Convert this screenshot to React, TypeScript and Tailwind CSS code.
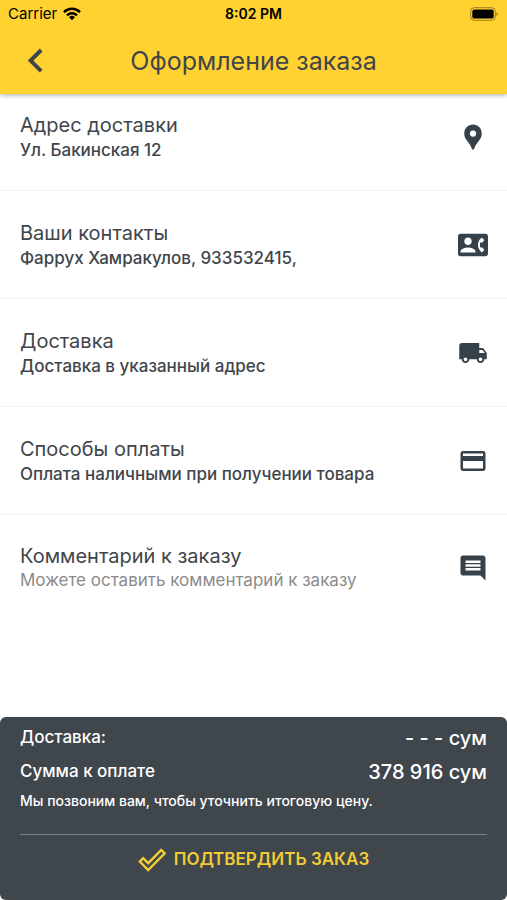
import React from 'react';
import { IconType } from 'react-icons';
import { MdComment, MdContactPhone, MdCreditCard, MdLocalShipping, MdLocationPin } from 'react-icons/md';

interface OrderRow {
  title: string;
  value: string;
  icon: IconType;
}

const rows: OrderRow[] = [
  { title: 'Адрес доставки', value: 'Ул. Бакинская 12', icon: MdLocationPin },
  { title: 'Ваши контакты', value: 'Фаррух Хамракулов, 933532415,', icon: MdContactPhone },
  { title: 'Доставка', value: 'Доставка в указанный адрес', icon: MdLocalShipping },
  { title: 'Способы оплаты', value: 'Оплата наличными при получении товара', icon: MdCreditCard },
];

const StatusBar = () => (
  <div className="grid grid-cols-3 items-center h-7 px-2 text-black">
    <div className="flex items-center gap-1.5 text-[15px]">
      <span>Carrier</span>
      <svg width="18" height="14" viewBox="0 0 18 14" fill="none" stroke="currentColor" strokeWidth="2.5" aria-hidden="true">
        <path d="M1 5.1a11.4 11.4 0 0 1 16 0" />
        <path d="M4 8.3a7.2 7.2 0 0 1 10 0" />
        <path d="M9 13.2 6.1 10.2a4.1 4.1 0 0 1 5.8 0Z" fill="currentColor" stroke="none" />
      </svg>
    </div>
    <span className="text-center text-sm font-semibold">8:02 PM</span>
    <svg className="justify-self-end" width="31" height="14" viewBox="0 0 31 14" aria-hidden="true">
      <rect x="2.7" y="0.7" width="24.6" height="12.6" rx="3.8" fill="none" stroke="#000" strokeOpacity="0.4" />
      <rect x="4.3" y="2.4" width="21.4" height="9.2" rx="2.2" fill="#000" />
      <path d="M28.6 4.8a2.5 2.5 0 0 1 0 4.4Z" fill="#000" fillOpacity="0.45" />
    </svg>
  </div>
);

const Header = () => (
  <header className="relative bg-[#ffd232] shadow-[0_1px_5px_rgba(0,0,0,0.35)]">
    <StatusBar />
    <div className="grid grid-cols-[48px_1fr_48px] items-center h-[66px] px-3">
      <button type="button" aria-label="Назад" className="flex items-center justify-center h-12">
        <svg width="16" height="26" viewBox="0 0 16 26" fill="none" stroke="#3f464b" strokeWidth="4" aria-hidden="true">
          <path d="M13.2 2 2.6 12.6 13.2 23.2" />
        </svg>
      </button>
      <h1 className="text-center text-[25px] leading-8 text-[#3f464b] whitespace-nowrap">Оформление заказа</h1>
    </div>
  </header>
);

const App: React.FC = () => {
  return (
    <div className="flex flex-col min-h-screen bg-white text-[#3f464b] font-['Inter','Liberation_Sans',sans-serif]">
      <Header />

      <main className="flex-1">
        {rows.map(({ title, value, icon: Icon }, index) => (
          <button
            key={title}
            type="button"
            className={`flex w-full items-center justify-between pb-7 pl-5 pr-[19px] text-left border-b border-[#f3f3f3] ${
              index === 0 ? 'pt-[18px]' : 'pt-[29px]'
            }`}
          >
            <span className="flex flex-col">
              <span className="text-xl leading-[26px]">{title}</span>
              <span className="text-[17px] leading-6 font-medium">{value}</span>
            </span>
            <Icon size={30} className="shrink-0 text-[#374149]" />
          </button>
        ))}

        {/* Comment */}
        <div className="flex items-center justify-between pt-7 pb-7 pl-5 pr-[19px]">
          <div className="flex flex-1 flex-col">
            <label htmlFor="comment" className="text-xl leading-[26px]">Комментарий к заказу</label>
            <input
              id="comment"
              type="text"
              placeholder="Можете оставить комментарий к заказу"
              className="w-full h-6 text-[17px] outline-none placeholder:text-[#8b8b8b]"
            />
          </div>
          <MdComment size={30} className="shrink-0 text-[#374149]" />
        </div>
      </main>

      {/* Totals */}
      <footer className="rounded-md bg-[#3f464c] px-5 pt-1 text-white">
        <div className="flex items-center justify-between h-[34px]">
          <span className="text-[17px] font-medium">Доставка:</span>
          <span className="text-xl font-medium">- - - сум</span>
        </div>
        <div className="flex items-center justify-between h-[34px]">
          <span className="text-[17px] font-medium">Сумма к оплате</span>
          <span className="text-xl font-medium">378 916 сум</span>
        </div>
        <p className="text-sm leading-6 font-medium">Мы позвоним вам, чтобы уточнить итоговую цену.</p>
        <button
          type="button"
          className="flex w-full items-center justify-center gap-2 mt-[21px] h-[66px] pb-4 border-t border-[#7b8084] text-[17px] font-semibold text-[#f3cb35]"
        >
          <svg width="28" height="24" viewBox="0 0 28 24" fill="none" stroke="currentColor" strokeWidth="2.4" aria-hidden="true">
            <path d="M1.8 13.6 5.2 10.2 10.2 15.2 23.3 1.9 26.7 5.3 10.2 22Z" />
          </svg>
          ПОДТВЕРДИТЬ ЗАКАЗ
        </button>
      </footer>
    </div>
  );
};

export default App;
